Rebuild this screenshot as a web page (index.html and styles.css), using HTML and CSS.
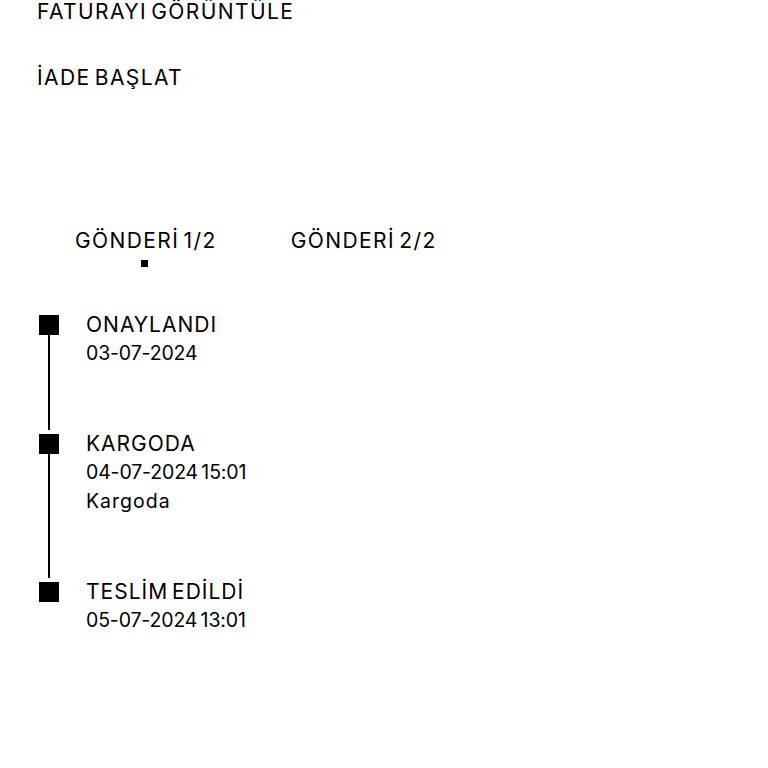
FILE: index.html
```html
<!DOCTYPE html>
<html lang="tr">
<head>
<meta charset="utf-8">
<link rel="stylesheet" href="styles.css">
</head>
<body>
<div class="page">
  <div class="actions">
    <a class="action">FATURAYI GÖRÜNTÜLE</a>
    <a class="action">İADE BAŞLAT</a>
  </div>
  <div class="tabs">
    <div class="tab active">GÖNDERİ 1/2</div>
    <div class="tab">GÖNDERİ 2/2</div>
  </div>
  <ul class="timeline">
    <li class="step">
      <div class="marker"><span class="dot"></span><span class="line"></span></div>
      <div class="info">
        <div class="title">ONAYLANDI</div>
        <div class="text">03-07-2024</div>
      </div>
    </li>
    <li class="step">
      <div class="marker"><span class="dot"></span><span class="line"></span></div>
      <div class="info">
        <div class="title">KARGODA</div>
        <div class="text">04-07-2024 15:01</div>
        <div class="text note">Kargoda</div>
      </div>
    </li>
    <li class="step last">
      <div class="marker"><span class="dot"></span></div>
      <div class="info">
        <div class="title">TESLİM EDİLDİ</div>
        <div class="text">05-07-2024 13:01</div>
      </div>
    </li>
  </ul>
</div>
</body>
</html>
```

FILE: styles.css
```css
html, body {
  margin: 0;
  padding: 0;
  background: #fff;
}
body {
  font-family: Inter, "Liberation Sans", Arial, sans-serif;
  color: #000;
}
.page {
  padding: 0 0 0 37px;
}
.actions {
  display: flex;
  flex-direction: column;
  gap: 38px;
  margin-top: -2px;
}
.action {
  font-size: 21px;
  line-height: 28px;
  letter-spacing: 1.4px;
  word-spacing: -3px;
  color: #000;
  text-decoration: none;
}
.tabs {
  display: flex;
  gap: 74px;
  margin-top: 135px;
  padding-left: 38px;
}
.tab {
  font-size: 21px;
  line-height: 28px;
  letter-spacing: 1.4px;
  word-spacing: -3px;
  position: relative;
  padding-bottom: 20px;
}
.tab.active::after {
  content: "";
  position: absolute;
  left: 66px;
  top: 33px;
  width: 7px;
  height: 7px;
  background: #000;
}
.timeline {
  list-style: none;
  margin: 36px 0 0 0;
  padding: 0 0 0 2px;
}
.step {
  display: flex;
  gap: 27px;
}
.marker {
  display: flex;
  flex-direction: column;
  align-items: center;
  width: 20px;
  padding-top: 4px;
}
.dot {
  width: 20px;
  height: 20px;
  background: #000;
  flex: none;
}
.line {
  width: 2px;
  flex: 1;
  background: #000;
}
.info {
  padding-bottom: 62px;
}
.step.last .info {
  padding-bottom: 0;
}
.title {
  font-size: 21px;
  line-height: 28px;
  letter-spacing: 1px;
  word-spacing: -3px;
}
.text {
  font-size: 19.5px;
  line-height: 29px;
  letter-spacing: -0.15px;
  word-spacing: -2px;
}
.note {
  letter-spacing: 1px;
}
```
